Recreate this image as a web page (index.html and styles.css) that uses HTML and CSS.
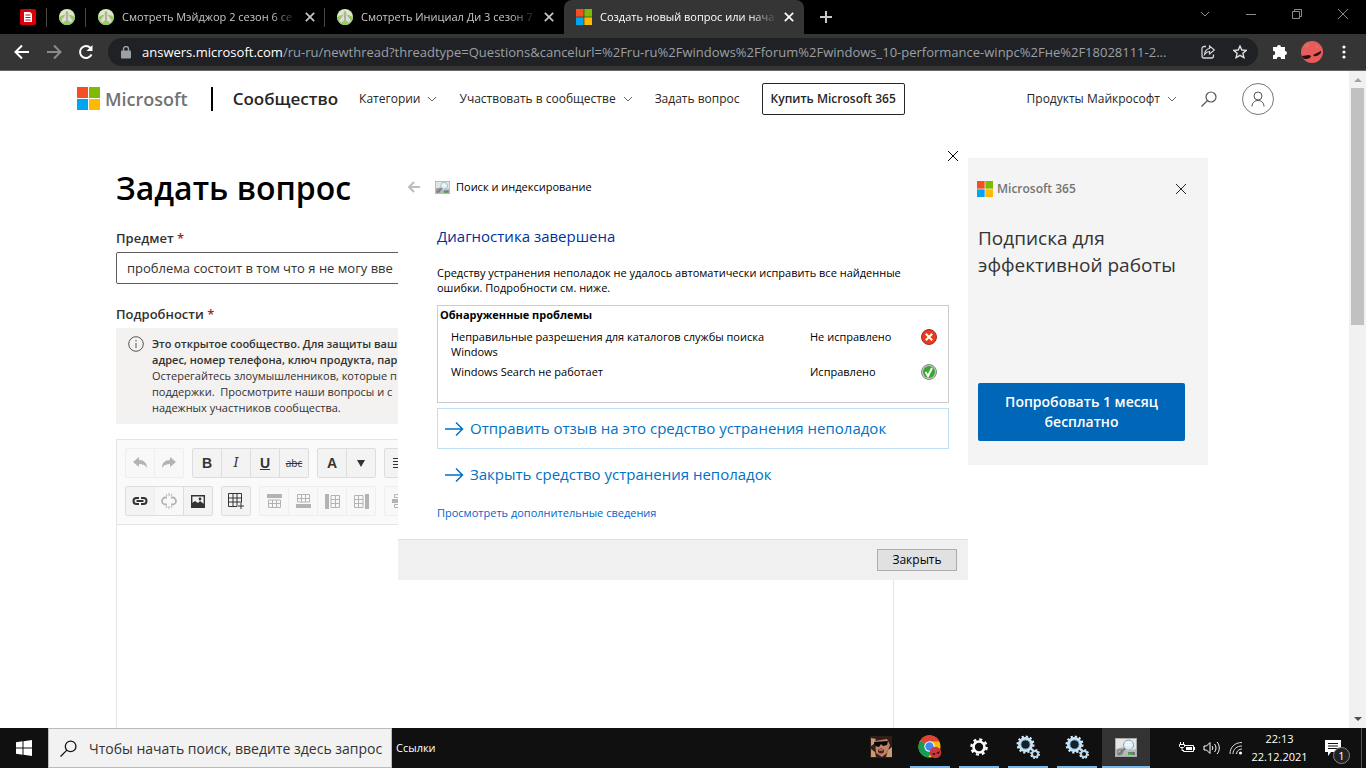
FILE: index.html
```html
<!DOCTYPE html>
<html lang="ru">
<head>
<meta charset="utf-8">
<title>Создать новый вопрос</title>
<link rel="stylesheet" href="styles.css">
</head>
<body>
<svg class="sprite" aria-hidden="true">
  <symbol id="ms" viewBox="0 0 23 23"><path fill="#f25022" d="M0 0h11v11H0z"/><path fill="#7fba00" d="M12 0h11v11H12z"/><path fill="#00a4ef" d="M0 12h11v11H0z"/><path fill="#ffb900" d="M12 12h11v11H12z"/></symbol>
  <symbol id="hands" viewBox="0 0 16 16"><circle cx="8" cy="8" r="8" fill="#dcebbd"/><path d="M0 8a8 8 0 0 0 16 0L12 6H4z" fill="#8fd05f"/><path d="M7.600 2.500 6 6 2 11.500 4.500 14l3.100-3z" fill="#e8d9d3" stroke="#aaa" stroke-width=".5"/><path d="M8.400 2.500l1.600 3.500 4 5.500-2.500 2.500-3.100-3z" fill="#e8d9d3" stroke="#aaa" stroke-width=".5"/><path d="M8 2.500v8" stroke="#999" stroke-width=".8"/></symbol>
  <symbol id="x" viewBox="0 0 12 12"><path d="M1 1l10 10M11 1L1 11" fill="none" stroke="currentColor"/></symbol>
  <symbol id="chev" viewBox="0 0 10 6"><path d="M1 1l4 4 4-4" fill="none" stroke="currentColor"/></symbol>
  <symbol id="lens" viewBox="0 0 16 16"><circle cx="10" cy="6" r="5" fill="none" stroke="currentColor" stroke-width="1.200"/><path d="M6.500 9.500L.5 15.500" stroke="currentColor" stroke-width="1.200"/></symbol>
  <symbol id="arrow" viewBox="0 0 20 16"><path d="M1 8h18M12 1.500L18.500 8 12 14.500" fill="none" stroke="currentColor" stroke-width="1.500"/></symbol>
  <symbol id="diag" viewBox="0 0 22 19"><path fill="#aaa" d="M0 0h22v19H0z"/><path fill="#e4e6e6" d="M1 1h20v17H1z"/><path d="M1 11l7-2 4 4 9-2v7H1z" fill="#b5b9b8"/><circle cx="5" cy="14" r="2.500" fill="none" stroke="#858a8a" stroke-width="1.500"/><circle cx="13.500" cy="7" r="5" fill="#d7eef8" stroke="#8aa5b2"/><path d="M10 4.500h7M9.500 7h8" stroke="#fff"/><path d="M10 10.500L3 17" stroke="#777" stroke-width="2"/><path d="M13 14h7v3h-7z" fill="#707873"/><path d="M13 15h4v2h-4z" fill="#29c527"/></symbol>
  <symbol id="gears" viewBox="0 0 24 24"><circle cx="9.500" cy="9.500" r="6" fill="none" stroke="#c9e5f5" stroke-width="3"/><circle cx="9.500" cy="9.500" r="8" fill="none" stroke="#d9effa" stroke-width="2" stroke-dasharray="2.200 1.990"/><circle cx="9.500" cy="9.500" r="4.500" fill="#152028" stroke="#75a5c5"/><circle cx="19" cy="19" r="3" fill="none" stroke="#b7d8ed" stroke-width="2"/><circle cx="19" cy="19" r="4.300" fill="none" stroke="#d9effa" stroke-width="1.300" stroke-dasharray="1.800 1.577"/></symbol>
</svg>

<header class="tabs">
  <div class="tab small"><svg width="16" height="16" viewBox="0 0 16 16"><rect width="16" height="16" rx="2" fill="#d9000d"/><path d="M4 3h6l2 2v8H4z" fill="#fff"/><path d="M5.500 6h5M5.500 8.500h5M5.500 11h5" stroke="#d9000d"/></svg></div>
  <div class="tab small"><svg width="16" height="16"><use href="#hands"/></svg></div>
  <div class="tab"><svg width="16" height="16"><use href="#hands"/></svg><span class="tab-title">Смотреть Мэйджор 2 сезон 6 се</span><button class="tab-x" aria-label="Закрыть вкладку"><svg width="10" height="10"><use href="#x"/></svg></button></div>
  <div class="tab last"><svg width="16" height="16"><use href="#hands"/></svg><span class="tab-title">Смотреть Инициал Ди 3 сезон 7</span><button class="tab-x" aria-label="Закрыть вкладку"><svg width="10" height="10"><use href="#x"/></svg></button></div>
  <div class="tab active"><svg width="16" height="16"><use href="#ms"/></svg><span class="tab-title">Создать новый вопрос или нача</span><button class="tab-x" aria-label="Закрыть вкладку"><svg width="10" height="10"><use href="#x"/></svg></button></div>
  <button class="new-tab" aria-label="Новая вкладка"><svg width="12" height="12" viewBox="0 0 12 12"><path d="M6 0v12M0 6h12" stroke="currentColor" stroke-width="2"/></svg></button>
  <div class="win-controls">
    <button aria-label="Поиск вкладок"><svg width="10" height="6"><use href="#chev"/></svg></button>
    <button aria-label="Свернуть"><svg width="10" height="10" viewBox="0 0 10 10"><path d="M0 5.500h10" stroke="currentColor"/></svg></button>
    <button aria-label="Восстановить"><svg width="10" height="10" viewBox="0 0 10 10"><path d="M.5 2.500h7v7h-7zM2.500 2.500v-2h7v7h-2" fill="none" stroke="currentColor"/></svg></button>
    <button aria-label="Закрыть окно"><svg width="12" height="12"><use href="#x"/></svg></button>
  </div>
</header>

<div class="toolbar">
  <button class="tool" aria-label="Назад"><svg width="16" height="16" viewBox="0 0 16 16"><path d="M15 8H2M8 1.500L1.500 8 8 14.500" fill="none" stroke="#fff" stroke-width="2"/></svg></button>
  <button class="tool" aria-label="Вперёд"><svg width="16" height="16" viewBox="0 0 16 16"><path d="M1 8h13M8 1.500L14.500 8 8 14.500" fill="none" stroke="#8b8b8d" stroke-width="2"/></svg></button>
  <button class="tool" aria-label="Обновить"><svg width="16" height="16" viewBox="0 0 16 16"><path d="M13.500 10.500A6 6 0 1 1 12.500 4" fill="none" stroke="#fff" stroke-width="2"/><path d="M14.500 1v6h-6z" fill="#fff"/></svg></button>
  <div class="omnibox">
    <svg width="10" height="13" viewBox="0 0 10 13"><rect y="4.500" width="10" height="8" rx="1" fill="#9aa0a6"/><path d="M2.500 5V3a2.500 2.500 0 0 1 5 0v2" fill="none" stroke="#9aa0a6" stroke-width="1.400"/></svg>
    <span class="url"><b>answers.microsoft.com</b>/ru-ru/newthread?threadtype=Questions&amp;cancelurl=%2Fru-ru%2Fwindows%2Fforum%2Fwindows_10-performance-winpc%2Fне%2F18028111-2...</span>
    <svg width="14" height="14" viewBox="0 0 14 14" fill="none" stroke="#d4d5d7"><path d="M5 1.500H3a2 2 0 0 0-2 2V11a2 2 0 0 0 2 2h7.500a2 2 0 0 0 2-2V9.500" stroke-width="1.300"/><path d="M8.500 1l5 4-5 4V6.500C6 6.500 5 7.500 3.500 9.500c.3-3 2-5.500 5-6z" stroke-width="1.200"/></svg>
    <svg width="14" height="14" viewBox="0 0 14 14"><path d="M7 1l1.800 4 4.400.4-3.300 2.900 1 4.300L7 10.300l-3.900 2.300 1-4.300L.8 5.400l4.400-.4z" fill="none" stroke="#e0e0e0" stroke-width="1.400"/></svg>
  </div>
  <button class="tool" aria-label="Расширения"><svg width="16" height="16" viewBox="0 0 16 16"><path d="M5 3a2 2 0 0 1 4 0h4v4a2 2 0 0 1 0 4v4H9.200a2.200 2.200 0 0 0-4.400 0H1v-3.800a2.200 2.200 0 0 0 0-4.400V3z" fill="#fff"/></svg></button>
  <button class="tool" aria-label="Профиль"><svg width="22" height="22" viewBox="0 0 22 22"><circle cx="11" cy="11" r="11" fill="#e85b5b"/><path d="M3 4l3-2 3 2-4 4zM14 3l4 3-2 3z" fill="#d6735f"/><path d="M1 15l7-1 2 1c0 3-6 4-8 2zM12 14l8-4c1 3-5 6-7 5z" fill="#2b0b0f"/></svg></button>
  <button class="tool" aria-label="Меню"><svg width="4" height="14" viewBox="0 0 4 14" fill="#fff"><circle cx="2" cy="2" r="1.600"/><circle cx="2" cy="7" r="1.600"/><circle cx="2" cy="12" r="1.600"/></svg></button>
</div>

<div class="viewport">
  <div class="page">
    <nav class="site-nav">
      <a class="brand" href="#"><svg width="23" height="23"><use href="#ms"/></svg><span>Microsoft</span></a>
      <a class="community" href="#">Сообщество</a>
      <a class="link" href="#">Категории<svg width="10" height="6"><use href="#chev"/></svg></a>
      <a class="link" href="#">Участвовать в сообществе<svg width="10" height="6"><use href="#chev"/></svg></a>
      <a class="link" href="#">Задать вопрос</a>
      <a class="buy" href="#">Купить Microsoft 365</a>
      <a class="link products" href="#">Продукты Майкрософт<svg width="10" height="6"><use href="#chev"/></svg></a>
      <button class="find" aria-label="Поиск"><svg width="16" height="16"><use href="#lens"/></svg></button>
      <button class="account" aria-label="Учётная запись"><svg width="14" height="16" viewBox="0 0 14 16" fill="none" stroke="#555"><circle cx="7" cy="5" r="4"/><path d="M1 15.500c0-8 12-8 12 0"/></svg></button>
    </nav>

    <div class="columns">
      <main class="form">
        <h1>Задать вопрос</h1>
        <label class="field-label" for="subject">Предмет <i>*</i></label>
        <input class="subject" id="subject" type="text" value="проблема состоит в том что я не могу вве">
        <h2 class="field-label details">Подробности <i>*</i></h2>
        <div class="notice">
          <svg width="16" height="16" viewBox="0 0 16 16"><circle cx="8" cy="8" r="7.300" fill="none" stroke="#555"/><path d="M8 7v5M8 4v1.500" stroke="#555"/></svg>
          <p><strong>Это открытое сообщество. Для защиты ваш<br>адрес, номер телефона, ключ продукта, пар</strong><br>Остерегайтесь злоумышленников, которые п<br>поддержки.&nbsp; Просмотрите наши вопросы и с<br>надежных участников сообщества.</p>
        </div>
        <div class="editor">
          <div class="editor-bar">
            <div class="row">
              <div class="group off">
                <button aria-label="Отменить"><svg width="14" height="12" viewBox="0 0 14 12"><path d="M6 0v3c5 0 8 3 8 8-2-3-4-4-8-4v3L0 5z" fill="currentColor"/></svg></button>
                <button aria-label="Повторить"><svg width="14" height="12" viewBox="0 0 14 12"><path d="M8 0v3c-5 0-8 3-8 8 2-3 4-4 8-4v3l6-5z" fill="currentColor"/></svg></button>
              </div>
              <div class="group"><button class="bold">B</button><button class="ital">I</button><button class="under">U</button><button class="strike">abc</button></div>
              <div class="group"><button class="bold">A</button><button aria-label="Цвет"><svg width="8" height="7" viewBox="0 0 8 7"><path d="M0 0h8L4 7z" fill="currentColor"/></svg></button></div>
              <div class="group"><button aria-label="По ширине"><svg width="12" height="12" viewBox="0 0 12 12"><path d="M0 1.500h12M0 4.500h12M0 7.500h12M0 10.500h12" stroke="currentColor"/></svg></button></div>
            </div>
            <div class="row">
              <div class="group">
                <button aria-label="Ссылка"><svg width="16" height="10" viewBox="0 0 16 10" fill="none" stroke="currentColor" stroke-width="2"><path d="M7 8H4.500a3 3 0 0 1 0-6H7M9 2h2.500a3 3 0 0 1 0 6H9M4.500 5h7"/></svg></button>
                <button class="off" aria-label="Убрать ссылку"><svg width="16" height="16" viewBox="0 0 16 16" fill="none" stroke="currentColor"><path d="M6 11.500H4.500a3.500 3.500 0 0 1 0-7H6M10 4.500h1.500a3.500 3.500 0 0 1 0 7H10" stroke-width="1.800"/><path d="M8 0v3M8 13v3M5 1l1 2M11 1l-1 2M5 15l1-2M11 15l-1-2"/></svg></button>
                <button aria-label="Изображение"><svg width="14" height="13" viewBox="0 0 14 13"><path d="M.7.7h12.600v11.600H.7z" fill="none" stroke="currentColor" stroke-width="1.400"/><path d="M1 12V8l3-2 3 2 2-2 4 3v3z" fill="currentColor"/><circle cx="9" cy="4" r="1.400" fill="currentColor"/></svg></button>
              </div>
              <div class="group"><button aria-label="Таблица"><svg width="16" height="16" viewBox="0 0 16 16"><path d="M.5.500h13v9M9 13.500H.5V.5M.5 5h13M.5 9h13M5 .5v13M9 .5v13M13 10v6M10 13h6" fill="none" stroke="currentColor"/></svg></button></div>
              <div class="group off">
                <button aria-label="Строка выше"><svg width="15" height="14" viewBox="0 0 15 14"><path d="M0 0h15v4H0z" fill="currentColor"/><path d="M1.500 6h12v7.500h-12zM1.500 9.500h12M5.500 6v8M9.500 6v8" fill="none" stroke="currentColor"/></svg></button>
                <button aria-label="Строка ниже"><svg width="15" height="14" viewBox="0 0 15 14"><path d="M0 10h15v4H0z" fill="currentColor"/><path d="M1.500.5h12V8h-12zM1.500 4.500h12M5.500 0v8M9.500 0v8" fill="none" stroke="currentColor"/></svg></button>
                <button aria-label="Столбец слева"><svg width="15" height="15" viewBox="0 0 15 15"><path d="M0 0h4v15H0z" fill="currentColor"/><path d="M6 1.500h8.500v12H6zM10.500 1v12M6 5.500h8M6 9.500h8" fill="none" stroke="currentColor"/></svg></button>
                <button aria-label="Столбец справа"><svg width="15" height="15" viewBox="0 0 15 15"><path d="M11 0h4v15h-4z" fill="currentColor"/><path d="M.5 1.500H9v12H.5zM4.500 1v12M.5 5.500H9M.5 9.500H9" fill="none" stroke="currentColor"/></svg></button>
              </div>
              <div class="group off"><button aria-label="Удалить строку"><svg width="15" height="14" viewBox="0 0 15 14"><path d="M0 5h15v4H0z" fill="currentColor"/><path d="M2.500.5h10v3h-10zM2.500 10.500h10v3h-10z" fill="none" stroke="currentColor"/></svg></button></div>
            </div>
          </div>
          <textarea class="editor-text" aria-label="Подробности"></textarea>
        </div>
      </main>
      <aside class="promo">
        <div class="promo-head"><svg width="16" height="16"><use href="#ms"/></svg><span>Microsoft 365</span><button aria-label="Закрыть рекламу"><svg width="12" height="12"><use href="#x"/></svg></button></div>
        <p>Подписка для эффективной работы</p>
        <a class="try" href="#">Попробовать 1 месяц бесплатно</a>
      </aside>
    </div>
  </div>
  <div class="scrollbar"><svg width="8" height="4" viewBox="0 0 8 4"><path d="M0 4l4-4 4 4z" fill="#a3a3a3"/></svg><div class="thumb"></div><svg width="8" height="4" viewBox="0 0 8 4"><path d="M0 0l4 4 4-4z" fill="#505050"/></svg></div>

  <section class="dialog" role="dialog" aria-labelledby="dlg-title">
    <button class="dialog-x" aria-label="Закрыть"><svg width="12" height="12"><use href="#x"/></svg></button>
    <div class="dialog-head">
      <svg width="13" height="12" viewBox="0 0 13 12"><path d="M13 6H2M7 1L2 6l5 5" fill="none" stroke="#bdbdbd" stroke-width="2"/></svg>
      <svg width="15" height="13"><use href="#diag"/></svg>
      <span>Поиск и индексирование</span>
    </div>
    <div class="dialog-body">
      <h2 id="dlg-title">Диагностика завершена</h2>
      <p>Средству устранения неполадок не удалось автоматически исправить все найденные<br>ошибки. Подробности см. ниже.</p>
      <table class="problems">
        <caption>Обнаруженные проблемы</caption>
        <tr><td>Неправильные разрешения для каталогов службы поиска<br>Windows</td><td>Не исправлено</td><td><svg width="16" height="16" viewBox="0 0 16 16"><circle cx="8" cy="8" r="7.500" fill="#ea3a1c" stroke="#a92a20"/><path d="M4.800 4.800l6.400 6.400M11.200 4.800l-6.400 6.400" stroke="#fff" stroke-width="2"/></svg></td></tr>
        <tr><td>Windows Search не работает</td><td>Исправлено</td><td><svg width="16" height="16" viewBox="0 0 16 16"><circle cx="8" cy="8" r="7.500" fill="#c9c9c9" stroke="#888"/><circle cx="8" cy="8" r="6" fill="#36a82b"/><path d="M4.500 8l2.500 4 4-8" fill="none" stroke="#fff" stroke-width="2"/></svg></td></tr>
      </table>
      <button class="action framed"><svg width="20" height="16"><use href="#arrow"/></svg>Отправить отзыв на это средство устранения неполадок</button>
      <button class="action"><svg width="20" height="16"><use href="#arrow"/></svg>Закрыть средство устранения неполадок</button>
      <a class="more" href="#">Просмотреть дополнительные сведения</a>
    </div>
    <footer class="dialog-foot"><button>Закрыть</button></footer>
  </section>
</div>

<footer class="taskbar">
  <button class="start" aria-label="Пуск"><svg width="16" height="16" viewBox="0 0 16 16" fill="#fff"><path d="M0 2.200L6.500 1.300V7.500H0zM7.500 1.200L16 0v7.500H7.500zM0 8.500h6.500v6.200L0 13.800zM7.500 8.500H16V16l-8.500-1.200z"/></svg></button>
  <label class="search"><svg width="17" height="17"><use href="#lens"/></svg><input type="text" aria-label="Поиск" placeholder="Чтобы начать поиск, введите здесь запрос"></label>
  <span class="links">Ссылки</span>
  <div class="apps">
    <button class="app" aria-label="Игра"><svg width="22" height="22" viewBox="0 0 22 22"><path fill="#2f1f18" d="M0 0h22v22H0z"/><path d="M5 5l12-2 3 6-3 8-5 4-6-4z" fill="#bd8365"/><path d="M1 2l5 1-2 5-3 2zM18 14l4-3v10h-6zM1 13l4 3 1 5H1z" fill="#c99a75"/><path d="M4 6l14-1-1 4-4 1-2-2-2 3-4-1z" fill="#080707"/><ellipse cx="11" cy="15" rx="3" ry="2.500" fill="#5c1c1c"/><path d="M9 14h4" stroke="#d9b5a8"/></svg></button>
    <button class="app open" aria-label="Chrome"><svg width="24" height="24" viewBox="0 0 24 24"><circle cx="11.500" cy="11.500" r="11" fill="#fbbc05"/><path d="M11.500 11.500L2 6A11 11 0 0 1 21.500 6.500H11.500z" fill="#db4437"/><path d="M2 6a11 11 0 0 0 8 16.500l5-8-3.500-3z" fill="#0f9d58"/><circle cx="11.500" cy="11.500" r="5.200" fill="#fff"/><circle cx="11.500" cy="11.500" r="4.200" fill="#4285f4"/><circle cx="17.500" cy="17.500" r="5.800" fill="#c9393c"/><path d="M13 19l4-1v2zM18 18l4-2-1 3z" fill="#3a0e14"/></svg></button>
    <button class="app open" aria-label="Параметры"><svg width="20" height="20" viewBox="0 0 20 20"><circle cx="10" cy="10" r="5.500" fill="none" stroke="#fff" stroke-width="2.600"/><circle cx="10" cy="10" r="7.600" fill="none" stroke="#fff" stroke-width="2.400" stroke-dasharray="3 2.969"/></svg></button>
    <button class="app open" aria-label="Служба"><svg width="24" height="24"><use href="#gears"/></svg></button>
    <button class="app open" aria-label="Служба"><svg width="24" height="24"><use href="#gears"/></svg></button>
    <button class="app open current" aria-label="Поиск и индексирование"><svg width="22" height="19"><use href="#diag"/></svg></button>
  </div>
  <div class="tray">
    <svg width="16" height="12" viewBox="0 0 16 12" fill="none" stroke="#fff"><path d="M6 3.500h8.500v6H4.500V8M15.500 5v3M1.500 0v3M4.500 0v3M.5 2.500h5v2l-1 1h-3l-1-1zM3 5.500v3h2"/><path d="M7 5h6v3H7z" fill="#fff" stroke="none"/></svg>
    <svg width="18" height="14" viewBox="0 0 18 14" fill="none" stroke="#fff"><path d="M1 5h2.500L7 1.500v11L3.500 9H1zM9 5c1 1 1 3 0 4M11.500 3c2 2 2 6 0 8M14 1c3 3 3 9 0 12"/></svg>
    <svg width="14" height="14" viewBox="0 0 14 14" fill="none" stroke="#ddd"><path d="M1 13C1 6 6 1.500 13 1.500M4 13c0-5 4-8 9-8M7.500 13c0-3 2.500-5 5.500-5"/><circle cx="11.500" cy="12" r="1.500" fill="#fff" stroke="none"/></svg>
  </div>
  <div class="clock"><span>22:13</span><span>22.12.2021</span></div>
  <button class="center" aria-label="Уведомления"><svg width="16" height="16" viewBox="0 0 16 16"><path d="M0 0h16v12H6l-3 4v-4H0z" fill="#fff"/><path d="M3 3.500h10M3 6h10M3 8.500h10" stroke="#111"/></svg><b>1</b></button>
</footer>
</body>
</html>
```
FILE: styles.css
```css
* { box-sizing: border-box; }
body {
  margin: 0;
  height: 100vh;
  display: flex;
  flex-direction: column;
  overflow: hidden;
  background: #fff;
  color: #000;
  font: 12px/16px "Open Sans", "Noto Sans", sans-serif;
}
button { padding: 0; border: 0; background: none; color: inherit; font: inherit; }
a { color: inherit; text-decoration: none; }
h1, h2, p { margin: 0; }
svg { flex: none; display: block; }
.sprite { position: absolute; width: 0; height: 0; }

/* Browser tabs */
.tabs { display: flex; height: 34px; padding-left: 8px; background: #000; color: #c8c8c8; }
.tab { display: flex; align-items: center; width: 239px; padding: 0 7px 0 12px; position: relative; }
.tab::after { content: ""; position: absolute; right: 0; top: 8px; width: 1px; height: 19px; background: #4a4a4a; }
.tab.small { width: 39px; }
.tab.active::after { display: none; }
.tab.last::after { display: none; }
.tab.active { width: 240px; background: #353535; border-radius: 8px 8px 0 0; color: #fff; }
.tab-title {
  flex: 1;
  margin-left: 8px;
  white-space: nowrap;
  font-size: 11px;
  mask-image: linear-gradient(to right, #000 85%, transparent);
}
.tab-x { display: grid; place-items: center; width: 16px; height: 16px; margin-left: 4px; }
.tab-x svg { stroke-width: 2; }
.new-tab { display: grid; place-items: center; width: 44px; }
.win-controls { display: flex; margin-left: auto; color: #8c8c8c; }
.win-controls button { display: grid; place-items: center; width: 46px; height: 28px; }

/* Address bar */
.toolbar { display: flex; align-items: center; height: 37px; padding: 0 6px; background: #353535; border-bottom: 1px solid #666; }
.tool { display: grid; place-items: center; width: 32px; height: 32px; }
.omnibox {
  flex: 1;
  min-width: 0;
  display: flex;
  align-items: center;
  gap: 18px;
  height: 28px;
  margin: 0 6px;
  padding: 0 11px 0 13px;
  border-radius: 14px;
  background: #202124;
}
.url { flex: 1; margin-left: -7px; overflow: hidden; white-space: nowrap; font-size: 13px; line-height: 20px; color: #9aa0a6; }
.url b { font-weight: 400; color: #fff; }

/* Page area */
.viewport { flex: 1; min-height: 0; display: flex; position: relative; }
.page { flex: 1; min-width: 0; overflow: hidden; display: flex; flex-direction: column; }
.scrollbar { width: 17px; display: flex; flex-direction: column; align-items: center; padding: 7px 0; background: #f1f1f1; }
.thumb { width: 13px; height: 237px; margin: 6px 0 auto; background: #c1c1c1; }

.site-nav { display: flex; align-items: center; height: 55px; padding: 0 75px 0 77px; color: #262626; }
.brand { display: flex; align-items: center; gap: 5px; height: 24px; padding-right: 23px; border-right: 2px solid #000; color: #737373; font-size: 18px; font-weight: 600; }
.community { margin: 0 21px 0 20px; font-size: 17px; font-weight: 600; }
.link { display: flex; align-items: center; gap: 7px; margin-right: 22px; white-space: nowrap; }
.link svg { color: #666; }
.buy { padding: 7px 8px; border: 1px solid #262626; border-radius: 2px; font-weight: 600; white-space: nowrap; }
.products { margin-left: auto; margin-right: 24px; }
.find { margin-right: 25px; color: #555; }
.account { display: grid; place-items: center; width: 32px; height: 32px; border: 1px solid #777; border-radius: 50%; }

.columns { flex: 1; min-height: 0; display: grid; grid-template-columns: 1fr 240px; gap: 74px; align-items: start; padding: 32px 141px 0 116px; }
.form { display: flex; flex-direction: column; align-self: stretch; min-width: 0; min-height: 0; }
h1 { padding: 6px 0 2px; font-size: 32px; line-height: 48px; font-weight: 600; }
.field-label { padding-top: 14px; font-size: 13px; line-height: 20px; font-weight: 600; color: #323130; }
.field-label i { color: #a4262c; font-style: normal; }
.details { padding-top: 20px; }
.subject { height: 32px; margin-top: 4px; padding: 0 10px; border: 1px solid #605e5c; border-radius: 2px; color: #323130; font: 13px "Open Sans", "Noto Sans", sans-serif; }
.notice { display: flex; gap: 8px; margin-top: 4px; padding: 8px 12px; background: #f3f2f1; color: #323130; font-size: 11px; white-space: nowrap; }
.notice strong { font-weight: 600; }

.editor { flex: 1; min-height: 0; display: flex; flex-direction: column; margin-top: 15px; border: 1px solid #e5e5e5; border-bottom: 0; }
.editor-bar { display: flex; flex-direction: column; gap: 8px; padding: 8px; background: #fafafa; border-bottom: 1px solid #e5e5e5; }
.row { display: flex; gap: 8px; }
.group { display: flex; border: 1px solid #ddd; border-radius: 2px; background: #f3f3f3; color: #333; }
.group button { display: grid; place-items: center; width: 28px; height: 28px; }
.group button + button { width: 29px; border-left: 1px solid #ddd; }
.group.off, .group .off { background: #f8f8f8; color: #b3b3b3; border-color: #eee; }
.group.off button + button { border-color: #eee; }
.bold, .ital, .under { font-family: "Liberation Sans", sans-serif; font-size: 14px; font-weight: 700; }
.ital { font-family: "DejaVu Serif", serif; font-size: 13px; font-style: italic; font-weight: 400; }
.under { text-decoration: underline; }
.strike { font-size: 10px; text-decoration: line-through; }
.editor-text { flex: 1; border: 0; resize: none; background: #fff; }

.promo { display: flex; flex-direction: column; padding: 23px 21px 24px 9px; background: #f4f4f4; }
.promo-head { display: flex; align-items: center; gap: 4px; height: 16px; color: #737373; font-weight: 600; }
.promo-head button { margin-left: auto; color: #222; }
.promo p { padding: 28px 0 104px 1px; font-size: 19px; line-height: 27px; color: #333; }
.try { margin: 0 2px 0 1px; padding: 9px 16px; border-radius: 2px; background: #0067b8; color: #fff; font-size: 14px; line-height: 20px; font-weight: 600; text-align: center; }

/* Troubleshooter window */
.dialog { position: absolute; left: 398px; top: 69px; width: 570px; padding-top: 40px; background: #fff; }
.dialog-x { position: absolute; right: 9px; top: 10px; }
.dialog-head { display: flex; align-items: center; height: 14px; padding-left: 9px; font-size: 11px; }
.dialog-head svg + svg { margin: 0 6px 0 15px; }
.dialog-body { display: flex; flex-direction: column; padding: 31px 19px 19px 39px; font-size: 11px; line-height: 15px; }
.dialog-body h2 { font-size: 15px; line-height: 22px; font-weight: 400; color: #003399; }
.dialog-body p { padding: 18px 0 10px; }
.problems { display: block; padding: 0 0 22px; border: 1px solid #ccc; border-spacing: 0; }
.problems caption { display: block; padding: 1px 2px 2px; text-align: left; font-weight: 700; }
.problems tbody { display: grid; }
.problems tr { display: grid; grid-template-columns: 1fr 111px 16px; align-items: start; padding: 5px 11px 0 13px; }
.problems td { padding: 0; }
.action { display: flex; align-items: center; gap: 6px; height: 41px; padding: 0 6px; border: 1px solid transparent; color: #0071c5; font-size: 15px; white-space: nowrap; }
.action.framed { margin: 5px 0; border-color: #bfdff5; }
.more { margin-top: 10px; color: #0066cc; }
.dialog-foot { display: flex; justify-content: flex-end; padding: 9px 11px; border-top: 1px solid #dfdfdf; background: #f0f0f0; }
.dialog-foot button { width: 80px; height: 22px; border: 1px solid #adadad; background: #e1e1e1; }

/* Taskbar */
.taskbar { display: flex; align-items: center; height: 40px; background: #101010; color: #fff; }
.start { display: grid; place-items: center; width: 48px; height: 40px; }
.search { display: flex; align-items: center; gap: 12px; width: 344px; height: 40px; padding-left: 11px; border: 1px solid #bbb; background: #f2f2f2; color: #111; }
.search input { flex: 1; min-width: 0; padding: 0; border: 0; background: none; font: 14px "Open Sans", "Noto Sans", sans-serif; }
.search input::placeholder { color: #333; opacity: 1; }
.links { margin-left: 4px; font-size: 11px; }
.apps { display: flex; gap: 9px; margin-left: auto; }
.app { display: grid; place-items: center; width: 40px; height: 40px; border-bottom: 2px solid transparent; }
.app.open { border-color: #76b9ed; }
.app.current { width: 48px; margin-left: -4px; background: #333; }
.tray { display: flex; align-items: center; gap: 8px; margin-left: 29px; }
.clock { display: flex; flex-direction: column; align-items: center; width: 69px; padding-left: 4px; font-size: 11px; line-height: 18px; }
.center { display: grid; place-items: center; position: relative; width: 50px; height: 40px; padding-right: 7px; margin-right: 4px; border-right: 1px solid #555; }
.center b { position: absolute; right: 11px; bottom: 4px; width: 17px; height: 17px; border: 1px solid #888; border-radius: 50%; background: #222; font-size: 11px; line-height: 15px; font-weight: 400; }
```
